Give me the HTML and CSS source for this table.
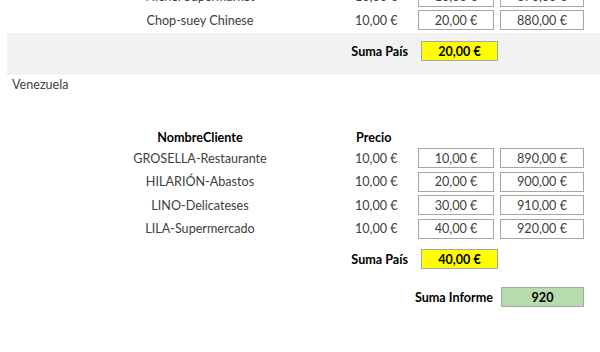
FILE: index.html
```html
<!DOCTYPE html>
<html lang="es">
<head>
<meta charset="utf-8">
<link rel="stylesheet" href="styles.css">
</head>
<body>
<div class="report">
  <section class="detail detail-top">
    <div class="row">
      <div class="name">Nichel Supermarket</div>
      <div class="price">10,00 €</div>
      <div class="box box1">10,00 €</div>
      <div class="box box2">870,00 €</div>
    </div>
    <div class="row">
      <div class="name">Chop-suey Chinese</div>
      <div class="price">10,00 €</div>
      <div class="box box1">20,00 €</div>
      <div class="box box2">880,00 €</div>
    </div>
  </section>
  <section class="footer-band">
    <div class="sum-row">
      <div class="sum-label">Suma País</div>
      <div class="sum-box">20,00 €</div>
    </div>
  </section>
  <div class="country">Venezuela</div>
  <div class="head-row">
    <div class="name">NombreCliente</div>
    <div class="price">Precio</div>
  </div>
  <section class="detail">
    <div class="row">
      <div class="name">GROSELLA-Restaurante</div>
      <div class="price">10,00 €</div>
      <div class="box box1">10,00 €</div>
      <div class="box box2">890,00 €</div>
    </div>
    <div class="row">
      <div class="name">HILARIÓN-Abastos</div>
      <div class="price">10,00 €</div>
      <div class="box box1">20,00 €</div>
      <div class="box box2">900,00 €</div>
    </div>
    <div class="row">
      <div class="name">LINO-Delicateses</div>
      <div class="price">10,00 €</div>
      <div class="box box1">30,00 €</div>
      <div class="box box2">910,00 €</div>
    </div>
    <div class="row">
      <div class="name">LILA-Supermercado</div>
      <div class="price">10,00 €</div>
      <div class="box box1">40,00 €</div>
      <div class="box box2">920,00 €</div>
    </div>
  </section>
  <div class="sum-row sum-row-plain">
    <div class="sum-label">Suma País</div>
    <div class="sum-box">40,00 €</div>
  </div>
  <div class="total-row">
    <div class="total-label">Suma Informe</div>
    <div class="total-box">920</div>
  </div>
</div>
</body>
</html>
```
FILE: styles.css
```css
html, body {
  margin: 0;
  padding: 0;
  background: #ffffff;
}
body {
  width: 600px;
  height: 352px;
  overflow: hidden;
  font-family: Lato, "Open Sans", sans-serif;
  font-size: 12.6px;
  color: #404040;
}
.report {
  display: flex;
  flex-direction: column;
}
.detail {
  display: flex;
  flex-direction: column;
  gap: 3.5px;
}
.detail-top {
  margin-top: -13.5px;
}
.row, .head-row {
  display: grid;
  grid-template-columns: 160px 138px 76px 90px;
  padding-left: 120px;
  height: 20px;
  align-items: center;
}
.name {
  text-align: center;
  white-space: nowrap;
}
.price {
  padding-left: 75px;
  white-space: nowrap;
}
.box {
  box-sizing: border-box;
  height: 20px;
  border: 1px solid #a6a6a6;
  display: flex;
  align-items: center;
  justify-content: center;
  white-space: nowrap;
}
.box2 {
  margin-left: 6px;
}
.footer-band {
  margin-top: 3px;
  margin-left: 7px;
  height: 42px;
  background: #f2f2f2;
  box-sizing: border-box;
  padding-top: 8px;
}
.sum-row {
  display: flex;
  align-items: center;
  height: 20px;
  padding-left: 301px;
}
.sum-row-plain {
  padding-left: 308px;
  margin-top: 10.5px;
}
.sum-label {
  width: 100px;
  text-align: right;
  font-weight: bold;
  color: #000;
  white-space: nowrap;
}
.sum-box {
  box-sizing: border-box;
  margin-left: 13px;
  width: 77px;
  height: 20px;
  background: #ffff00;
  border: 1px solid #a6a6a6;
  font-weight: bold;
  color: #000;
  display: flex;
  align-items: center;
  justify-content: center;
}
.country {
  height: 20px;
  line-height: 20px;
  padding-left: 12px;
}
.head-row {
  margin-top: 32px;
  height: 20px;
  margin-bottom: 1px;
}
.head-row .name, .head-row .price {
  font-weight: bold;
  color: #000;
}
.head-row .price {
  padding-left: 76px;
}
.total-row {
  display: flex;
  align-items: center;
  height: 20px;
  margin-top: 18px;
  padding-left: 343px;
}
.total-label {
  width: 150px;
  text-align: right;
  font-weight: bold;
  color: #000;
  white-space: nowrap;
}
.total-box {
  box-sizing: border-box;
  margin-left: 8px;
  width: 83px;
  height: 20px;
  background: #b6dcae;
  border: 1px solid #a6a6a6;
  font-weight: bold;
  color: #000;
  display: flex;
  align-items: center;
  justify-content: center;
}
```
